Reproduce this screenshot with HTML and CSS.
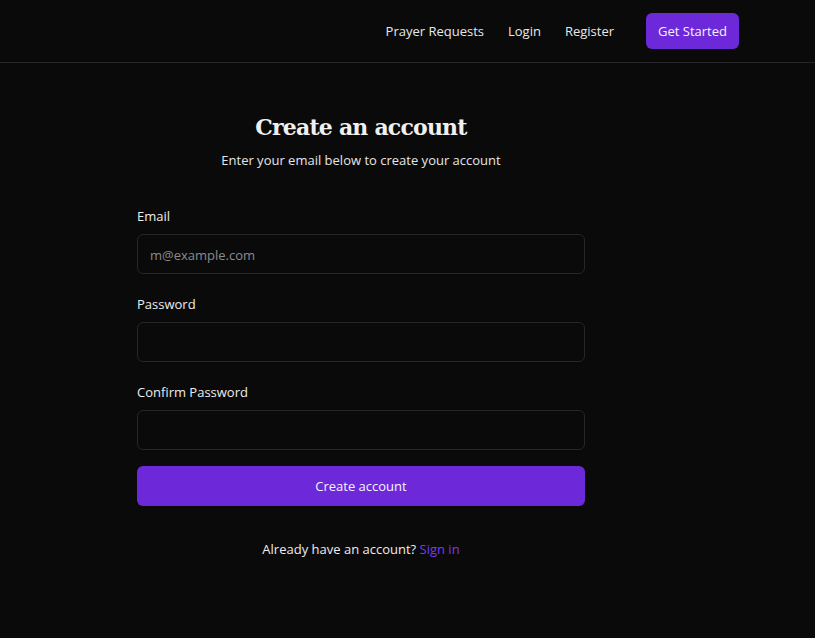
FILE: index.html
```html
<!DOCTYPE html>
<html lang="en">
<head>
<meta charset="utf-8">
<title>Create an account</title>
<link rel="stylesheet" href="styles.css">
</head>
<body>
<header class="site-header">
  <nav class="nav">
    <a class="nav-link" href="#">Prayer Requests</a>
    <a class="nav-link" href="#">Login</a>
    <a class="nav-link" href="#">Register</a>
    <a class="nav-cta" href="#">Get Started</a>
  </nav>
</header>
<main class="main">
  <section class="auth">
    <h1 class="auth-title">Create an account</h1>
    <p class="auth-sub">Enter your email below to create your account</p>
    <form class="form">
      <div class="field">
        <label class="label" for="email">Email</label>
        <input class="input" id="email" type="email" placeholder="m@example.com">
      </div>
      <div class="field">
        <label class="label" for="pw">Password</label>
        <input class="input" id="pw" type="password">
      </div>
      <div class="field">
        <label class="label" for="pw2">Confirm Password</label>
        <input class="input" id="pw2" type="password">
      </div>
      <button class="submit" type="button">Create account</button>
    </form>
    <p class="auth-foot">Already have an account? <a class="link" href="#">Sign in</a></p>
  </section>
</main>
</body>
</html>
```
FILE: styles.css
```css
* { box-sizing: border-box; }
html, body { margin: 0; padding: 0; }
body {
  background: #0b0a0a;
  color: #ededed;
  font-family: "Open Sans", "Noto Sans", sans-serif;
  font-size: 13px;
  min-height: 638px;
}
.site-header {
  height: 63px;
  border-bottom: 1px solid #262626;
  display: flex;
  align-items: center;
  justify-content: flex-end;
  padding-right: 76px;
}
.nav {
  display: flex;
  align-items: center;
  gap: 24px;
}
.nav-link {
  color: #e8e8e8;
  text-decoration: none;
  line-height: 20px;
}
.nav-cta {
  margin-left: 8px;
  background: #6d28d9;
  color: #f5f3ff;
  text-decoration: none;
  height: 36px;
  padding: 0 12px;
  display: flex;
  align-items: center;
  border-radius: 6px;
}
.main {
  padding: 48px 0 0 137px;
}
.auth {
  width: 448px;
  display: flex;
  flex-direction: column;
}
.auth-title {
  margin: 0;
  text-align: center;
  font-family: "DejaVu Serif", "Liberation Serif", serif;
  font-weight: bold;
  font-size: 22px;
  line-height: 32px;
  color: #f0f0f0;
  letter-spacing: -0.8px;
}
.auth-sub {
  margin: 7px 0 0;
  text-align: center;
  line-height: 20px;
  color: #e6e6e6;
}
.form {
  margin-top: 36px;
  display: flex;
  flex-direction: column;
  gap: 20px;
}
.field {
  display: flex;
  flex-direction: column;
  gap: 8px;
}
.label {
  line-height: 20px;
  color: #ededed;
}
.input {
  height: 40px;
  background: #0b0a0a;
  border: 1px solid #262626;
  border-radius: 6px;
  padding: 1px 12px 0;
  color: #ededed;
  font: inherit;
  outline: none;
}
.input::placeholder { color: #8a8a8a; }
.submit {
  margin-top: -4px;
  height: 40px;
  padding-top: 1px;
  background: #6d28d9;
  color: #f5f3ff;
  border: none;
  border-radius: 6px;
  font: inherit;
}
.auth-foot {
  margin: 33px 0 0;
  text-align: center;
  line-height: 20px;
  color: #ededed;
}
.link { color: #7c3aed; text-decoration: none; }
```
